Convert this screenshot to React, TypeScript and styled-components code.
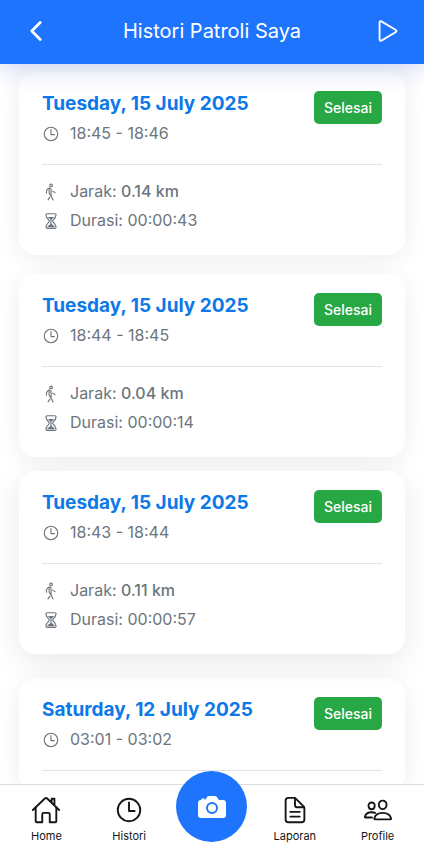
import React from 'react';
import styled, { createGlobalStyle, css } from 'styled-components';
import {
  IoCamera,
  IoChevronBackOutline,
  IoDocumentTextOutline,
  IoHomeOutline,
  IoHourglassOutline,
  IoPeopleOutline,
  IoPlayOutline,
  IoTimeOutline,
  IoWalkOutline,
} from 'react-icons/io5';

const GlobalStyle = createGlobalStyle`
  *, *::before, *::after { box-sizing: border-box; }
  body {
    margin: 0;
    background: #ffffff;
    font-family: Inter, "Liberation Sans", sans-serif;
    color: #6c757d;
  }
`;

const Screen = styled.div`
  display: flex;
  flex-direction: column;
  height: 100vh;
  overflow: hidden;
`;

const Header = styled.header`
  display: grid;
  grid-template-columns: 72px 1fr 72px;
  align-items: center;
  flex: none;
  height: 64px;
  background: #1e74fd;
  color: #ffffff;
  box-shadow: 0 4px 24px rgba(40, 70, 200, 0.24);
  z-index: 1;
`;

const Title = styled.h1`
  margin: 0;
  font-size: 20px;
  font-weight: 400;
  line-height: 28px;
  padding-bottom: 2px;
  text-align: center;
`;

const HeaderButton = styled.button`
  display: flex;
  align-items: center;
  justify-content: center;
  height: 62px;
  padding: 0 0 2px;
  border: 0;
  background: none;
  color: inherit;
  font-size: 30px;
  cursor: pointer;
`;

const History = styled.main`
  flex: 1;
  min-height: 0;
  overflow: hidden;
  display: flex;
  flex-direction: column;
  gap: 19px;
  padding: 8px 19px;
`;

const Card = styled.article<{ $raised?: boolean }>`
  flex: none;
  padding: 19px 23px 20px;
  border-radius: 16px;
  background: #ffffff;
  box-shadow: 0 4px 24px rgba(0, 0, 0, 0.07);
  ${({ $raised }) =>
    $raised &&
    css`
      transform: translateY(-5px);
      box-shadow: 0 8px 32px rgba(0, 0, 0, 0.09);
    `}
`;

const CardTop = styled.div`
  display: flex;
  align-items: flex-start;
  justify-content: space-between;
  height: 74px;
  border-bottom: 1px solid #e2e3e5;
`;

const DateHeading = styled.h2`
  margin: 0;
  font-size: 19px;
  font-weight: 700;
  line-height: 26px;
  color: #0d78e8;
`;

const Badge = styled.span`
  padding: 0 10px;
  border-radius: 5px;
  background: #28a745;
  color: #ffffff;
  font-size: 14px;
  font-weight: 500;
  line-height: 33px;
`;

const Line = styled.p`
  display: flex;
  align-items: center;
  gap: 10px;
  margin: 0;
  font-size: 16px;
  line-height: 29px;

  svg {
    flex: none;
    font-size: 18px;
  }
`;

const TimeLine = styled(Line)`
  margin-top: 2px;
`;

const Details = styled.div`
  padding-top: 12px;
`;

const Value = styled.span`
  font-weight: 500;
`;

const Nav = styled.nav`
  display: grid;
  grid-template-columns: repeat(5, 1fr);
  flex: none;
  height: 67px;
  border-top: 1px solid #dcdce0;
  background: #ffffff;
  padding: 0 5px;
  z-index: 1;
`;

const NavLink = styled.a`
  display: flex;
  flex-direction: column;
  align-items: center;
  padding-top: 10px;
  color: #141515;
  font-size: 11px;
  line-height: 22px;
  text-decoration: none;

  svg {
    font-size: 30px;
  }
`;

const CameraButton = styled.button`
  display: flex;
  align-items: center;
  justify-content: center;
  justify-self: center;
  width: 71px;
  height: 71px;
  margin-top: -14px;
  padding: 0;
  border: 0;
  border-radius: 50%;
  background: #1e74fd;
  color: #ffffff;
  font-size: 32px;
  cursor: pointer;
`;

interface Patrol {
  date: string;
  time: string;
  distance: string;
  duration: string;
  raised?: boolean;
}

const patrols: Patrol[] = [
  { date: 'Tuesday, 15 July 2025', time: '18:45 - 18:46', distance: '0.14 km', duration: '00:00:43' },
  { date: 'Tuesday, 15 July 2025', time: '18:44 - 18:45', distance: '0.04 km', duration: '00:00:14' },
  { date: 'Tuesday, 15 July 2025', time: '18:43 - 18:44', distance: '0.11 km', duration: '00:00:57', raised: true },
  { date: 'Saturday, 12 July 2025', time: '03:01 - 03:02', distance: '', duration: '' },
];

function PatrolCard({ patrol }: { patrol: Patrol }) {
  return (
    <Card $raised={patrol.raised}>
      <CardTop>
        <div>
          <DateHeading>{patrol.date}</DateHeading>
          <TimeLine>
            <IoTimeOutline />
            {patrol.time}
          </TimeLine>
        </div>
        <Badge>Selesai</Badge>
      </CardTop>
      {patrol.distance && (
        <Details>
          <Line>
            <IoWalkOutline />
            <span>
              Jarak: <Value>{patrol.distance}</Value>
            </span>
          </Line>
          <Line>
            <IoHourglassOutline />
            Durasi: {patrol.duration}
          </Line>
        </Details>
      )}
    </Card>
  );
}

export default function App() {
  return (
    <>
      <GlobalStyle />
      <Screen>
        <Header>
          <HeaderButton type="button" aria-label="Kembali">
            <IoChevronBackOutline />
          </HeaderButton>
          <Title>Histori Patroli Saya</Title>
          <HeaderButton type="button" aria-label="Mulai">
            <IoPlayOutline />
          </HeaderButton>
        </Header>
        <History>
          {patrols.map((patrol) => (
            <PatrolCard key={patrol.date + patrol.time} patrol={patrol} />
          ))}
        </History>
        <Nav>
          <NavLink href="#home">
            <IoHomeOutline />
            Home
          </NavLink>
          <NavLink href="#histori">
            <IoTimeOutline />
            Histori
          </NavLink>
          <CameraButton type="button" aria-label="Kamera">
            <IoCamera />
          </CameraButton>
          <NavLink href="#laporan">
            <IoDocumentTextOutline />
            Laporan
          </NavLink>
          <NavLink href="#profile">
            <IoPeopleOutline />
            Profile
          </NavLink>
        </Nav>
      </Screen>
    </>
  );
}
